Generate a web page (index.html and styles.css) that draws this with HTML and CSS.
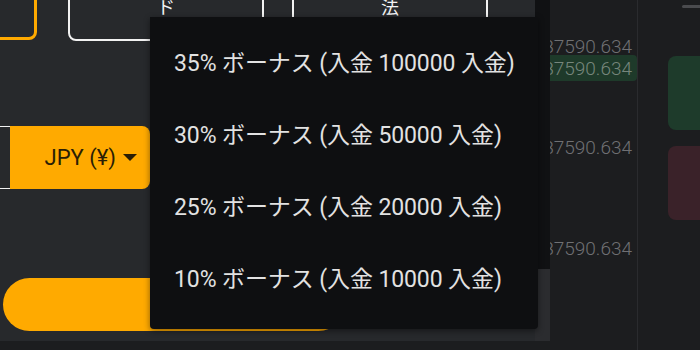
FILE: index.html
```html
<!DOCTYPE html>
<html lang="ja">
<head>
<meta charset="utf-8">
<link rel="stylesheet" href="styles.css">
</head>
<body>
<div class="page">
  <div class="left">
    <div class="content">
      <div class="tabs">
        <div class="tab tab-active"></div>
        <div class="tab tab-outline"><span>クレジットカー<br>ド</span></div>
        <div class="tab tab-outline"><span>その他の支払い方<br>法</span></div>
      </div>
      <div class="currency-row">
        <div class="amount-input"></div>
        <button class="currency-btn"><span>JPY (¥)</span><span class="caret"></span></button>
      </div>
      <button class="pill-btn"></button>
    </div>
    <div class="track">
      <div class="track-top"></div>
      <div class="track-bottom"></div>
    </div>
    <ul class="dropdown">
      <li class="dd-item">35% ボーナス (入金 100000 入金)</li>
      <li class="dd-item">30% ボーナス (入金 50000 入金)</li>
      <li class="dd-item">25% ボーナス (入金 20000 入金)</li>
      <li class="dd-item">10% ボーナス (入金 10000 入金)</li>
    </ul>
  </div>
  <div class="right">
    <div class="prices">
      <div class="price p1"><span>87590.634</span></div>
      <div class="price p2 up"><span>87590.634</span></div>
      <div class="price p3"><span>87590.634</span></div>
      <div class="price p4"><span>87590.634</span></div>
    </div>
    <div class="actions">
      <div class="handle"></div>
      <div class="act act-buy"></div>
      <div class="act act-sell"></div>
    </div>
  </div>
</div>
</body>
</html>
```
FILE: styles.css
```css
* { box-sizing: border-box; }
html, body { margin: 0; padding: 0; }
body {
  width: 700px;
  height: 350px;
  overflow: hidden;
  background: #1c1d1f;
  font-family: Roboto, "Noto Sans CJK JP", sans-serif;
}
.page {
  display: flex;
  width: 700px;
  height: 350px;
}
.left {
  position: relative;
  width: 550px;
  height: 341px;
  background: #27292c;
  display: flex;
  flex-shrink: 0;
}
.content {
  width: 535px;
  display: flex;
  flex-direction: column;
  overflow: hidden;
}
.tabs {
  display: flex;
  align-items: flex-start;
  margin-top: -40px;
  margin-left: -10px;
}
.tab {
  flex-shrink: 0;
  border-radius: 8px;
}
.tab-active {
  width: 47px;
  height: 80px;
  border: 3px solid #ffaa00;
}
.tab-outline {
  width: 196px;
  height: 81px;
  border: 2px solid #f2f2f2;
  display: flex;
  align-items: flex-end;
  justify-content: center;
  text-align: center;
  color: #f2f2f2;
  font-size: 18px;
  line-height: 22px;
  padding-bottom: 20px;
}
.tab-outline:nth-child(2) { margin-left: 31px; }
.tab-outline:nth-child(3) { margin-left: 28px; }
.currency-row {
  display: flex;
  margin-top: 85px;
}
.amount-input {
  width: 20px;
  height: 63px;
  margin-left: -10px;
  border: 1px solid #f2f2f2;
  border-right: none;
}
.currency-btn {
  width: 140px;
  height: 63px;
  border: none;
  background: #ffaa00;
  border-radius: 0 8px 8px 0;
  display: flex;
  align-items: center;
  justify-content: flex-end;
  gap: 7px;
  padding: 0 13px 0 0;
  font-family: Roboto, "Noto Sans CJK JP", sans-serif;
  font-size: 22px;
  color: #2a1e05;
}
.caret {
  width: 0;
  height: 0;
  border-left: 7px solid transparent;
  border-right: 7px solid transparent;
  border-top: 7px solid #2a1e05;
}
.pill-btn {
  margin-top: 89px;
  margin-left: 3px;
  width: 342px;
  height: 53px;
  border: none;
  border-radius: 27px;
  background: #ffaa00;
}
.track {
  width: 15px;
  display: flex;
  flex-direction: column;
}
.track-top {
  height: 269px;
  background: #101113;
}
.track-bottom {
  flex: 1;
  background: #2b2c2f;
}
.dropdown {
  position: absolute;
  left: 150px;
  top: 17px;
  width: 388px;
  height: 312px;
  margin: 0;
  padding: 8px 0 0 0;
  list-style: none;
  background: #0e0f11;
  border-radius: 0 0 4px 4px;
  box-shadow: 0 2px 6px rgba(0, 0, 0, 0.45);
}
.dd-item {
  height: 72px;
  display: flex;
  align-items: center;
  padding-left: 24px;
  color: #e2e2e2;
  font-size: 23px;
  letter-spacing: -0.1px;
  white-space: nowrap;
}
.right {
  flex: 1;
  display: flex;
  background: #1c1d1f;
}
.prices {
  width: 88px;
  border-right: 1px solid #2a2b2e;
  display: flex;
  flex-direction: column;
  overflow: hidden;
}
.price {
  display: flex;
  justify-content: flex-end;
  align-items: center;
  padding-right: 5px;
  font-size: 19px;
  font-weight: 300;
  color: #6f7073;
  white-space: nowrap;
}
.price span { flex-shrink: 0; }
.p1 { margin-top: 37px; height: 18px; }
.p2 { height: 26px; }
.p3 { margin-top: 55px; height: 22px; }
.p4 { margin-top: 79px; height: 22px; }
.up {
  background: #1e3a2a;
  border-radius: 0 4px 4px 0;
  color: #76867c;
}
.actions {
  flex: 1;
  display: flex;
  flex-direction: column;
  padding-left: 30px;
  overflow: hidden;
}
.handle {
  margin-top: 5px;
  margin-left: 14px;
  width: 40px;
  height: 3px;
  border-radius: 2px;
  background: #4a4b4e;
}
.act {
  width: 50px;
  height: 74px;
  border-radius: 8px;
  flex-shrink: 0;
}
.act-buy { margin-top: 48px; background: #1e3b2b; }
.act-sell { margin-top: 16px; background: #3a2229; }
```
